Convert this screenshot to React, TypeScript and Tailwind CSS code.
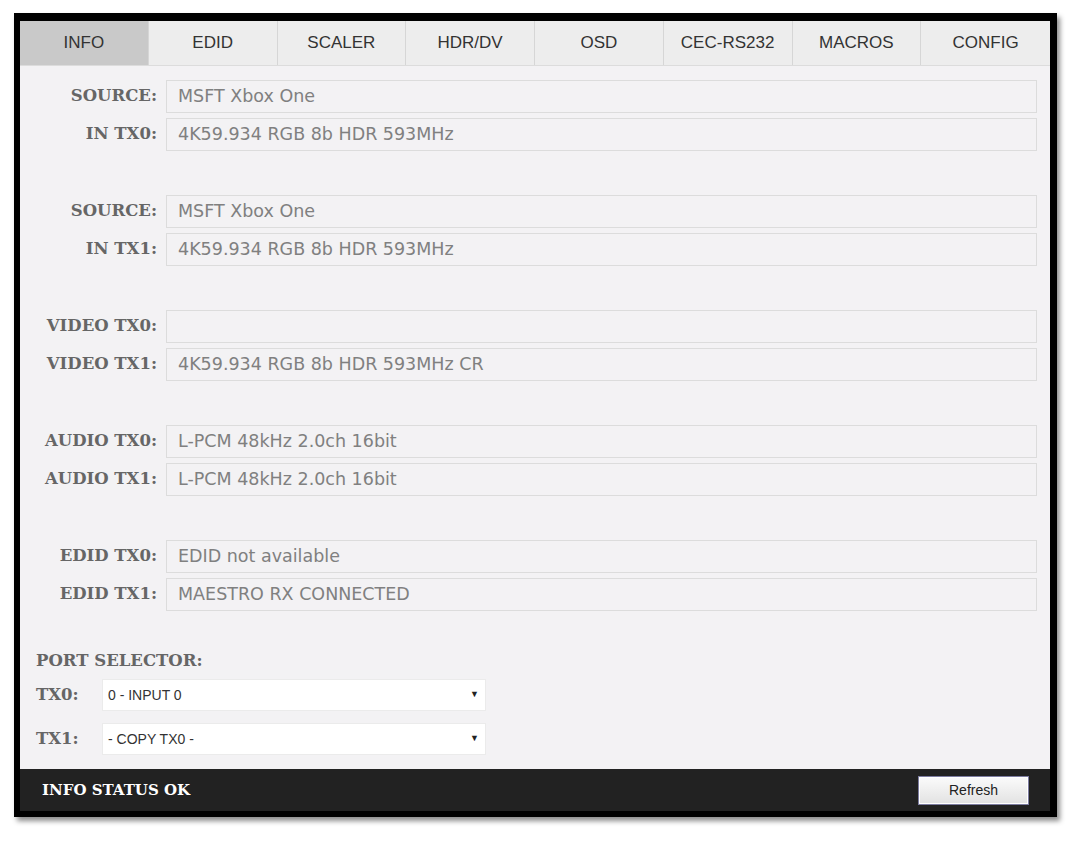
import React from "react";

const tabs = ["INFO", "EDID", "SCALER", "HDR/DV", "OSD", "CEC-RS232", "MACROS", "CONFIG"];

const groups: [string, string][][] = [
  [
    ["SOURCE:", "MSFT Xbox One"],
    ["IN TX0:", "4K59.934 RGB 8b HDR 593MHz"],
  ],
  [
    ["SOURCE:", "MSFT Xbox One"],
    ["IN TX1:", "4K59.934 RGB 8b HDR 593MHz"],
  ],
  [
    ["VIDEO TX0:", ""],
    ["VIDEO TX1:", "4K59.934 RGB 8b HDR 593MHz CR"],
  ],
  [
    ["AUDIO TX0:", "L-PCM 48kHz 2.0ch 16bit"],
    ["AUDIO TX1:", "L-PCM 48kHz 2.0ch 16bit"],
  ],
  [
    ["EDID TX0:", "EDID not available"],
    ["EDID TX1:", "MAESTRO RX CONNECTED"],
  ],
];

const serif = "font-['DejaVu_Serif','Liberation_Serif',Georgia,serif]";

function Field({ label, value }: { label: string; value: string }) {
  return (
    <div className="flex items-center">
      <div className={`w-[137px] shrink-0 text-right text-[16.5px] font-bold text-[#666666] ${serif}`}>
        {label}
      </div>
      <div className="ml-[9px] flex h-[33px] flex-1 items-center border border-[#dcdcdc] bg-[#f3f2f4] pl-[11px] font-['DejaVu_Sans',Verdana,sans-serif] text-[17.5px] text-[#808080]">
        {value}
      </div>
    </div>
  );
}

function Select({ label, value }: { label: string; value: string }) {
  return (
    <div className="flex items-center">
      <div className={`w-[82px] shrink-0 pl-[16px] text-[16.5px] font-bold text-[#666666] ${serif}`}>{label}</div>
      <div className="flex h-[32px] w-[384px] items-center justify-between border border-[#ebebeb] bg-white pl-[5px] pr-[6px] font-['Liberation_Sans',Arial,sans-serif] text-[14px] text-[#333]">
        <span>{value}</span>
        <span className="text-[9px] text-[#222]">▼</span>
      </div>
    </div>
  );
}

export default function App() {
  return (
    <div className="min-h-[841px] bg-white pl-[14px] pt-[13px]">
      <div className="w-[1043px] border-b-[6px] border-l-[6px] border-r-[7px] border-t-[8px] border-black shadow-[3px_4px_5px_rgba(0,0,0,0.45)]">
        <div className="flex flex-col bg-[#f3f2f4]">
          <div className="grid h-[45px] grid-cols-8 border-b border-[#dcdcdc]">
            {tabs.map((t, i) => (
              <div
                key={t}
                className={`flex items-center justify-center font-['Liberation_Sans',Arial,sans-serif] text-[17px] text-[#333] ${
                  i === 0 ? "bg-[#c9c9c9]" : "bg-[#ededed]"
                } ${i < tabs.length - 1 ? "border-r border-[#d6d6d6]" : ""}`}
              >
                {t}
              </div>
            ))}
          </div>
          <div className="flex flex-col pr-[13px] pt-[14px]">
            {groups.map((g, gi) => (
              <div key={gi} className="mb-[44px] flex flex-col gap-[5px]">
                {g.map(([l, v]) => (
                  <Field key={l + v} label={l} value={v} />
                ))}
              </div>
            ))}
          </div>
          <div className="-mt-[4px] flex flex-col pb-[14px]">
            <div className={`pl-[16px] text-[16.5px] leading-[20px] font-bold text-[#666666] ${serif}`}>PORT SELECTOR:</div>
            <div className="mt-[8px] flex flex-col gap-[12px]">
              <Select label="TX0:" value="0 - INPUT 0" />
              <Select label="TX1:" value="- COPY TX0 -" />
            </div>
          </div>
          <div className="flex h-[42px] items-center justify-between bg-[#222222] pl-[22px] pr-[21px]">
            <span className={`text-[15px] font-bold text-white ${serif}`}>INFO STATUS OK</span>
            <button className="h-[29px] w-[111px] border border-[#7c7ca0] bg-linear-to-b from-[#fbfbfb] to-[#e2e2e2] font-['Liberation_Sans',Arial,sans-serif] text-[14px] text-[#222] shadow-[inset_0_0_0_1px_#ffffff]">
              Refresh
            </button>
          </div>
        </div>
      </div>
    </div>
  );
}
